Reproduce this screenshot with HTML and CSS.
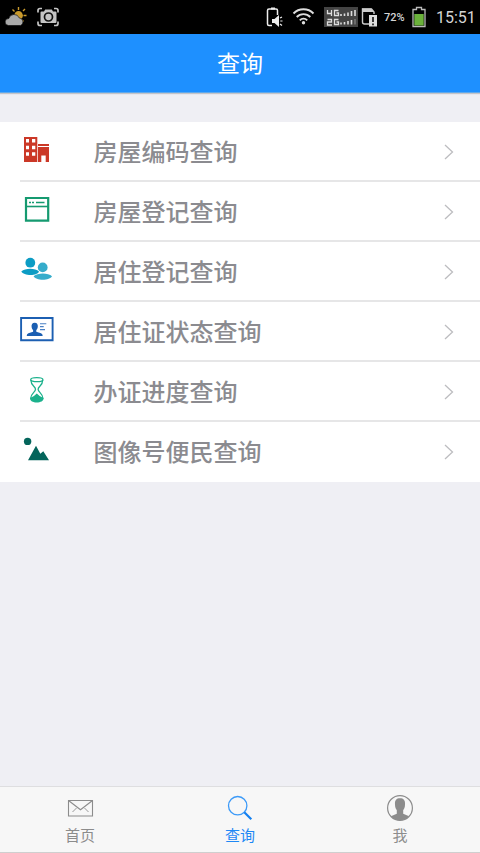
FILE: index.html
```html
<!DOCTYPE html>
<html lang="zh-CN">
<head>
<meta charset="utf-8">
<title>查询</title>
<link rel="stylesheet" href="styles.css">
</head>
<body>
<div class="screen">
  <div class="status">
    <svg class="status-left" width="64" height="34" viewBox="0 0 64 34">
      <g stroke="#c99a2c" stroke-width="1.4"><path d="M18.5 7v3M12.5 9.5l2 2M25 9l-2 2M23.500 15.500h3M22 20l1.500 1.500"/></g>
      <circle cx="18.500" cy="15.500" r="4.400" fill="#c99a2c"/>
      <path d="M8.500 25.500a3.500 3.500 0 0 1 .3-7 5.500 5.500 0 0 1 10.400-.6 4 4 0 0 1 1.500 7.600z" fill="#aaa" stroke="#000" stroke-width=".6"/>
      <path d="M38 12.500V10.500a2 2 0 0 1 2-2h2M54 8.500h2a2 2 0 0 1 2 2v2M38 21.500v2a2 2 0 0 0 2 2h2M54 25.500h2a2 2 0 0 0 2-2v-2" fill="none" stroke="#c4c4c4" stroke-width="1.700"/>
      <path d="M41.500 11.500H44l1.200-2h6.600l1.200 2h2.500a1 1 0 0 1 1 1V22a1 1 0 0 1-1 1h-14a1 1 0 0 1-1-1v-9.500a1 1 0 0 1 1-1z" fill="#c4c4c4"/>
      <circle cx="48.500" cy="17" r="4" fill="#c4c4c4" stroke="#111" stroke-width="1.700"/>
    </svg>
    <svg class="status-phone" width="115" height="34" viewBox="264 0 115 34">
      <path d="M272 25.500h-3a1.500 1.500 0 0 1-1.500-1.500V10.500A1.500 1.500 0 0 1 269 9h7a1.500 1.500 0 0 1 1.500 1.500V15" fill="none" stroke="#eee" stroke-width="1.500"/>
      <path d="M271 8.500h4" stroke="#eee" stroke-width="2"/>
      <path d="M272 19h2.500l4.500-4v12l-4.500-4H272z" fill="#eee"/>
      <path d="M280 18l2-1M280.300 21h2.200M280 24l2 1.500" stroke="#eee" stroke-width="1.200"/>
      <g fill="none" stroke="#ddd" stroke-width="1.900"><path d="M293.500 13.500a14 14 0 0 1 20 0M296.700 17a9.500 9.500 0 0 1 13.600 0M299.800 20.300a5 5 0 0 1 7.400 0"/></g>
      <circle cx="303.500" cy="22.800" r="1.700" fill="#ddd"/>
      <path d="M324 7h34v20h-34z" fill="#444"/>
      <g fill="none" stroke="#ddd" stroke-width="1.300"><path d="M327.500 10v3.500h4.500M331.500 10v6M338.500 10.500h-4v5h4v-2.500h-2M327.500 19.500h4v2.500h-4v3h4.500M338.500 19.500h-4v5h4V22h-2"/></g>
      <g stroke="#ddd" stroke-width="1.600"><path d="M341 14v2M344.500 13.500v2.500M348 12.500V16M351.500 11v5M355 10v6M341 22.500v2M344.500 22v2.500M348 21v3.500M351.500 20v4.500"/></g>
      <path d="M355 19v5.500" stroke="#777" stroke-width="1.600"/>
      <path d="M369 24h-4.500a2 2 0 0 1-2-2V9h9l2.500 3v2" fill="none" stroke="#ccc" stroke-width="1.400"/>
      <path d="M362 8.500h9l3 3.500h-12z" fill="#ccc"/>
      <path d="M369 15h8v11.500h-8z" fill="#ddd"/>
      <path d="M373 17v5M373 23.500v1.700" stroke="#111" stroke-width="1.600"/>
    </svg>
    <span class="percent">72%</span>
    <svg class="battery" width="14" height="34" viewBox="0 0 14 34">
      <path d="M1 9.500h3.500v-2h5v2H13v17H1z" fill="none" stroke="#bbb" stroke-width="1.300"/>
      <path d="M2.300 14h9.400v11.500H2.300z" fill="#6bb13b"/>
    </svg>
    <span class="clock">15:51</span>
  </div>

  <header class="header">查询</header>

  <ul class="list">
    <li class="row">
      <svg class="icon" viewBox="0 0 36 60">
        <path fill="#cb3827" fill-rule="evenodd" d="M4 15h13.300v25H4zM6 17v3.600h3V17zM12 17v3.600h3.300V17zM6 23.700v3.600h3v-3.600zM12 23.700v3.600h3.300v-3.600zM6 30.200v3.600h3v-3.600zM12 30.200v3.600h3.300v-3.600zM18 22h11v2H18zM18 25h11v15h-3.300v-6.500h-4.400V40H18z"/>
      </svg>
      <span class="name">房屋编码查询</span><svg class="chevron" viewBox="0 0 10 18"><path d="M1 2l7.500 7L1 16"/></svg>
    </li>
    <li class="row">
      <svg class="icon" viewBox="0 0 36 60">
        <path d="M6 16h22.200v22.700H6z" fill="none" stroke="#159a70" stroke-width="2.200"/>
        <path d="M5 24.500h24" stroke="#159a70" stroke-width="1.600"/>
        <path d="M9 20.500h2M12 20.500h2M16 20.500h8.500" stroke="#159a70" stroke-width="1.700"/>
      </svg>
      <span class="name">房屋登记查询</span><svg class="chevron" viewBox="0 0 10 18"><path d="M1 2l7.500 7L1 16"/></svg>
    </li>
    <li class="row">
      <svg class="icon" viewBox="0 0 36 60">
        <g fill="#0c9cc4"><circle cx="10.300" cy="20.700" r="4.900"/><path d="M1.300 29.500c4-3.600 14-3.600 17.700 0-1 4.600-15.500 4.600-17.700 0z"/></g>
        <g fill="#35accb"><circle cx="22.700" cy="25.400" r="4.900"/><path d="M13.600 34.300c4-3.600 14.600-3.600 18.400 0-2 4.600-16.500 4.600-18.400 0z"/></g>
      </svg>
      <span class="name">居住登记查询</span><svg class="chevron" viewBox="0 0 10 18"><path d="M1 2l7.500 7L1 16"/></svg>
    </li>
    <li class="row">
      <svg class="icon" viewBox="0 0 36 60">
        <path d="M1.100 16h31.500v22.200H1.100z" fill="none" stroke="#1c5fb2" stroke-width="1.900"/>
        <path d="M14.700 20.700c2.600 0 3.300 1.800 3.100 4-.1 1.500-.8 2.600-1.500 3.300v1.700l4.700 1.600q1.700.7 1.700 2.700H6.700q0-2 1.700-2.700l4.700-1.600V28c-.8-.8-1.400-1.800-1.500-3.300-.2-2.200.5-4 3.100-4z" fill="#1c5fb2"/>
        <path d="M20 21.700h6.300M20 24.600h3.700M20 27.600h5" stroke="#4a80c4" stroke-width="1.100"/>
      </svg>
      <span class="name">居住证状态查询</span><svg class="chevron" viewBox="0 0 10 18"><path d="M1 2l7.500 7L1 16"/></svg>
    </li>
    <li class="row">
      <svg class="icon" viewBox="0 0 36 60">
        <g fill="none" stroke="#1bb18c" stroke-width="1.300"><ellipse cx="16.800" cy="17.700" rx="6.100" ry="2"/><path d="M10.900 18c0 6 4.600 6 4.600 9.200 0 3.300-4.900 4-4.900 9.600M22.700 18c0 6-4.600 6-4.600 9.200 0 3.300 4.900 4 4.900 9.600"/></g>
        <path d="M10.100 36q3.500-1 6.700-4.500 3.200 3.500 6.700 4.500c.8 6-14.200 6-13.400 0z" fill="#1bb18c"/>
      </svg>
      <span class="name">办证进度查询</span><svg class="chevron" viewBox="0 0 10 18"><path d="M1 2l7.500 7L1 16"/></svg>
    </li>
    <li class="row">
      <svg class="icon" viewBox="0 0 36 60">
        <g fill="#04655b"><circle cx="7.600" cy="19.400" r="3.700"/><path d="M8 38.200l8-14.500 4.300 8 3-2.500 5.700 9z"/></g>
      </svg>
      <span class="name">图像号便民查询</span><svg class="chevron" viewBox="0 0 10 18"><path d="M1 2l7.500 7L1 16"/></svg>
    </li>
  </ul>

  <nav class="tabs">
    <div class="tab">
      <svg class="tab-icon" viewBox="0 0 30 30">
        <g fill="none" stroke="#8c8c8c" stroke-width="1.100"><path d="M3.500 7.500h24v15.500h-24zM3.500 7.500l12 9.300 12-9.300"/><path d="M7.500 19l4-4M23.500 19l-4-4" stroke-width=".9"/></g>
      </svg>
      <span>首页</span>
    </div>
    <div class="tab active">
      <svg class="tab-icon" viewBox="0 0 30 30">
        <circle cx="12.700" cy="12.700" r="9.200" fill="none" stroke="#3c9af8" stroke-width="1.300"/>
        <path d="M19.300 19.300l7 7" stroke="#1480f0" stroke-width="2.200"/>
      </svg>
      <span>查询</span>
    </div>
    <div class="tab">
      <svg class="tab-icon" viewBox="0 0 30 30">
        <circle cx="15" cy="15" r="12.400" fill="none" stroke="#8c8c8c" stroke-width="1.200"/>
        <path d="M15 5.300c4 0 5.300 2.400 5 6.200 0 3-.9 4.600-1.800 5.600v3.600l5.900 2.500a12.400 12.400 0 0 1-18.200 0l5.900-2.500v-3.600c-.9-1-1.800-2.600-1.800-5.600-.3-3.800 1-6.200 5-6.200z" fill="#8c8c8c"/>
      </svg>
      <span>我</span>
    </div>
  </nav>
</div>
</body>
</html>
```
FILE: styles.css
```css
* {
  box-sizing: border-box;
}

body {
  margin: 0;
  font-family: "Noto Sans CJK SC", sans-serif;
}

.screen {
  display: flex;
  flex-direction: column;
  width: 480px;
  height: 853px;
  overflow: hidden;
  background: #efeff4;
}

.status {
  display: flex;
  flex: none;
  align-items: center;
  height: 34px;
  background: #000;
  color: #d4d4d4;
  font-family: Roboto, sans-serif;
  white-space: nowrap;
}

.status svg {
  flex: none;
}

.status-phone {
  margin-left: 200px;
}

.percent {
  width: 28px;
  margin-left: 5px;
  font-size: 11px;
  font-weight: 500;
}

.clock {
  margin-left: 10px;
  font-size: 16px;
}

.header {
  flex: none;
  height: 59px;
  border-bottom: 1px solid #5fa9ec;
  box-shadow: 0 1px 1px #c4c4c8;
  background: #1e90ff;
  color: #fff;
  font-size: 23px;
  line-height: 56px;
  text-align: center;
}

.list {
  flex: none;
  margin: 29px 0 0;
  padding: 0;
  background: #fff;
  list-style: none;
}

.row {
  display: flex;
  align-items: center;
  height: 60px;
  margin-left: 20px;
  padding-right: 26px;
  background: linear-gradient(#e6e6e7, #e6e6e7) 0 58px / 100% 2px no-repeat;
}

.row:last-child {
  background: none;
}

.icon {
  flex: none;
  width: 36px;
  height: 60px;
}

.name {
  flex: 1;
  margin-left: 37.500px;
  padding-bottom: 2px;
  color: #8b8b90;
  font-size: 24px;
  font-weight: 500;
  line-height: 58px;
}

.chevron {
  width: 10px;
  height: 18px;
  fill: none;
  stroke: #bdbdc0;
  stroke-width: 1.300;
}

.tabs {
  display: flex;
  flex: none;
  height: 67px;
  margin-top: auto;
  border-top: 1px solid #dedee0;
  border-bottom: 1px solid #cfcfcf;
  background: #f7f7f7;
  color: #8c8c8c;
}

.tab {
  display: flex;
  flex: 1;
  flex-direction: column;
  align-items: center;
  padding-top: 6px;
  font-size: 15px;
  line-height: 24px;
}

.active {
  color: #1e88f5;
}

.tab-icon {
  width: 30px;
  height: 30px;
}
```
